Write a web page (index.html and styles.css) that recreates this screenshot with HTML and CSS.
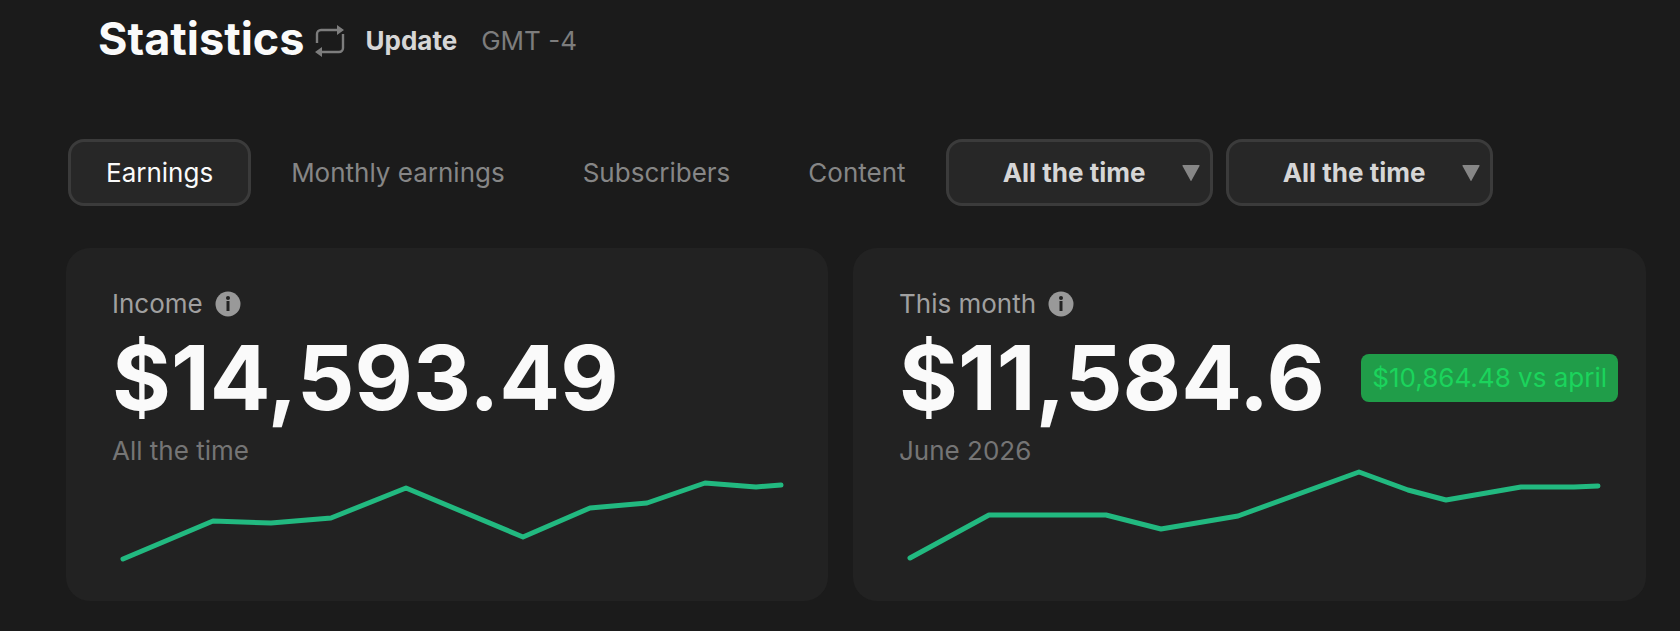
FILE: index.html
```
<!DOCTYPE html>
<html lang="en">
<head>
    <meta charset="UTF-8">
    <meta name="viewport" content="width=device-width, initial-scale=1.0">
    <title>Statistics</title>
    <link rel="stylesheet" href="styles.css">
</head>
<body>
    <header class="header">
        <h1 class="title">Statistics</h1>
        <button class="update" type="button">
            <svg class="update-icon" width="30" height="32" viewBox="0 0 30 32" aria-hidden="true">
                <path d="M2 18V9a4 4 0 0 1 4-4h17M28 9v14a4 4 0 0 1-4 4H7" fill="none" stroke="currentColor" stroke-width="2.400"/>
                <path d="M22 0l7 5-7 5zM7 22l-7 5 7 5z" fill="currentColor"/>
            </svg>
            Update
        </button>
        <span class="timezone">GMT -4</span>
    </header>

    <nav class="toolbar">
        <button class="tab active" type="button">Earnings</button>
        <button class="tab" type="button">Monthly earnings</button>
        <button class="tab" type="button">Subscribers</button>
        <button class="tab" type="button">Content</button>
        <div class="filters">
            <div class="filter">
                <select class="filter-select" aria-label="Period">
                    <option>All the time</option>
                </select>
                <svg class="filter-arrow" width="18" height="16" viewBox="0 0 18 16" aria-hidden="true">
                    <path d="M1 0h16q1 0 .5 1L9.500 15.500q-.5 1-1 0L.5 1Q0 0 1 0z" fill="currentColor"/>
                </svg>
            </div>
            <div class="filter">
                <select class="filter-select" aria-label="Source">
                    <option>All the time</option>
                </select>
                <svg class="filter-arrow" width="18" height="16" viewBox="0 0 18 16" aria-hidden="true">
                    <path d="M1 0h16q1 0 .5 1L9.500 15.500q-.5 1-1 0L.5 1Q0 0 1 0z" fill="currentColor"/>
                </svg>
            </div>
        </div>
    </nav>

    <main class="cards">
        <section class="card">
            <h2 class="card-label">
                Income
                <svg class="info" width="26" height="26" viewBox="0 0 26 26" aria-hidden="true">
                    <circle cx="13" cy="13" r="12.500" fill="#999999"/>
                    <circle cx="13" cy="7" r="2" fill="#222222"/>
                    <path d="M13 10v10" stroke="#222222" stroke-width="3"/>
                </svg>
            </h2>
            <div class="card-value">
                <span class="amount">$14,593.49</span>
            </div>
            <p class="card-period">All the time</p>
            <svg class="chart" viewBox="0 0 688 100" preserveAspectRatio="none" aria-hidden="true">
                <polyline points="11,92 101,54 159,56 219,51 294,21 411,70 478,41 535,36 593,16 644,20 669,18"/>
            </svg>
        </section>

        <section class="card">
            <h2 class="card-label">
                This month
                <svg class="info" width="26" height="26" viewBox="0 0 26 26" aria-hidden="true">
                    <circle cx="13" cy="13" r="12.500" fill="#999999"/>
                    <circle cx="13" cy="7" r="2" fill="#222222"/>
                    <path d="M13 10v10" stroke="#222222" stroke-width="3"/>
                </svg>
            </h2>
            <div class="card-value">
                <span class="amount">$11,584.6</span>
                <span class="badge">$10,864.48 vs april</span>
            </div>
            <p class="card-period">June 2026</p>
            <svg class="chart" viewBox="0 0 719 100" preserveAspectRatio="none" aria-hidden="true">
                <polyline points="11,91 90,48 207,48 262,62 339,49 460,5 509,23 547,33 622,20 675,20 699,19"/>
            </svg>
        </section>
    </main>
</body>
</html>
```
FILE: styles.css
```
* {
    box-sizing: border-box;
}

body {
    margin: 0;
    padding: 15px 34px 30px 66px;
    background-color: #1b1b1b;
    color: #fafafa;
    font-family: Inter, sans-serif;
    font-size: 26px;
    line-height: 32px;
}

button,
select {
    font: inherit;
    color: inherit;
    cursor: pointer;
}

.header {
    display: flex;
    align-items: center;
    padding-left: 32px;
    margin-bottom: 72px;
}

.title {
    margin: 0;
    padding-bottom: 4px;
    font-size: 45px;
    line-height: 48px;
    font-weight: 700;
}

.update {
    display: flex;
    align-items: center;
    gap: 21px;
    margin-left: 10px;
    padding: 0;
    border: 0;
    background: none;
    color: #d6d6d6;
    font-weight: 700;
}

.update-icon {
    color: #7d7d7d;
}

.timezone {
    margin-left: 24px;
    color: #7d7d7d;
}

.toolbar {
    display: flex;
    align-items: center;
    gap: 2px;
    margin-bottom: 42px;
    padding-left: 2px;
}

.tab {
    height: 67px;
    padding: 0 35px;
    border: 3px solid transparent;
    border-radius: 16px;
    background: none;
    color: #868686;
}

.tab.active {
    background-color: #272727;
    border-color: #3b3b3b;
    color: #fafafa;
}

.filters {
    display: flex;
    gap: 13px;
}

.filter {
    position: relative;
}

.filter-select {
    width: 267px;
    height: 67px;
    padding: 0 60px 0 50px;
    border: 3px solid #3b3b3b;
    border-radius: 16px;
    background-color: #272727;
    color: #d6d6d6;
    font-weight: 700;
    appearance: none;
    text-align-last: center;
}

.filter-arrow {
    position: absolute;
    top: 26px;
    right: 13px;
    color: #868686;
    pointer-events: none;
}

.cards {
    display: grid;
    grid-template-columns: 762fr 793fr;
    gap: 25px;
}

.card {
    padding: 40px 28px 34px 46px;
    border-radius: 24px;
    background-color: #222222;
}

.card-label {
    display: flex;
    align-items: center;
    gap: 12px;
    margin: 0;
    color: #a0a0a0;
    font-size: 26px;
    font-weight: 400;
}

.card-value {
    display: flex;
    align-items: center;
    justify-content: space-between;
    height: 115px;
}

.amount {
    font-size: 90px;
    line-height: 115px;
    font-weight: 700;
}

.badge {
    padding: 8px 11px;
    border-radius: 8px;
    background-color: #209d49;
    color: #1bd45c;
    white-space: nowrap;
}

.card-period {
    margin: 0;
    color: #757575;
}

.chart {
    display: block;
    width: 100%;
    height: 100px;
}

.chart polyline {
    fill: none;
    stroke: #22b980;
    stroke-width: 5;
    stroke-linecap: round;
    stroke-linejoin: round;
}
```
